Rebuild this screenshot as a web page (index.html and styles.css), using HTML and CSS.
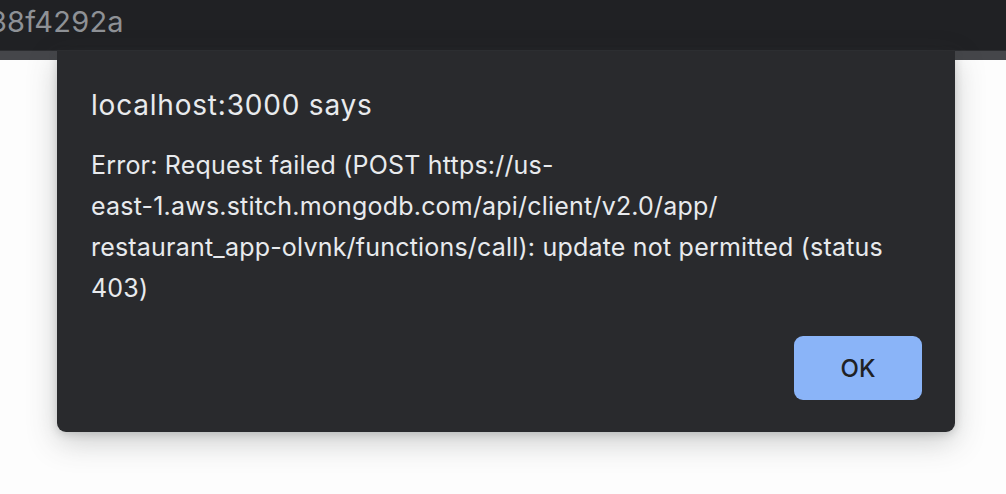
FILE: index.html
```html
<!DOCTYPE html>
<html lang="en">
<head>
<meta charset="utf-8">
<title>localhost:3000 says</title>
<link rel="stylesheet" href="styles.css">
</head>
<body>
<div class="page">
  <header class="topbar">
    <span class="topbar-text">38f4292a</span>
  </header>
  <div class="topbar-edge"></div>
  <main class="content"></main>
</div>
<div class="dialog" role="alertdialog">
  <div class="dialog-title">localhost:3000 says</div>
  <div class="dialog-message">Error: Request failed (POST https://us-<br>east-1.aws.stitch.mongodb.com/api/client/v2.0/app/<br>restaurant_app-olvnk/functions/call): update not permitted (status<br>403)</div>
  <div class="dialog-actions">
    <button class="btn-ok">OK</button>
  </div>
</div>
</body>
</html>
```

FILE: styles.css
```css
html, body {
  margin: 0;
  padding: 0;
  height: 100%;
  background: #fdfdfd;
  overflow: hidden;
}

body {
  font-family: Inter, "Noto Sans", "Liberation Sans", sans-serif;
}

.page {
  display: flex;
  flex-direction: column;
  height: 100%;
}

.topbar {
  height: 50px;
  background: #202124;
  display: flex;
  align-items: center;
  overflow: hidden;
  border-bottom: 1px solid #2c2d30;
}

.topbar-text {
  font-size: 29px;
  color: #8e9196;
  margin-left: -11px;
  margin-top: -8px;
  letter-spacing: 0.2px;
}

.topbar-edge {
  height: 9px;
  background: #45464a;
}

.content {
  flex: 1;
  background: #fdfdfd;
}

.dialog {
  position: absolute;
  left: 57px;
  top: 51px;
  width: 898px;
  box-sizing: border-box;
  padding: 37px 33px 32px 34px;
  background: #292a2d;
  border-radius: 0 0 9px 9px;
  box-shadow: 0 10px 30px rgba(60, 64, 67, 0.26), 0 2px 8px rgba(60, 64, 67, 0.2);
  color: #e8eaed;
}

.dialog-title {
  font-size: 28px;
  line-height: 34px;
  letter-spacing: 0.8px;
}

.dialog-message {
  margin-top: 23px;
  font-size: 25px;
  line-height: 41px;
  letter-spacing: 0.2px;
  white-space: nowrap;
}

.dialog-actions {
  display: flex;
  justify-content: flex-end;
  margin-top: 27px;
}

.btn-ok {
  width: 128px;
  height: 64px;
  border: none;
  border-radius: 9px;
  background: #8ab4f8;
  color: #202124;
  font-family: inherit;
  font-size: 24px;
  font-weight: 500;
  padding: 0;
}
```
